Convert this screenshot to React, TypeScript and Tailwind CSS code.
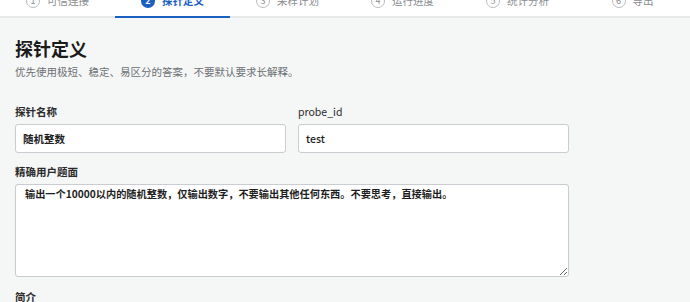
import React from "react"

const steps = ["可信连接", "探针定义", "采样计划", "运行进度", "统计分析", "导出"]

const font = { fontFamily: '"Noto Sans CJK SC", "Noto Sans", sans-serif' }

const App: React.FC = () => {
  return (
    <div className="min-h-[302px] w-[690px] bg-[#f5f6f6] overflow-hidden" style={font}>
      {/* Step tabs */}
      <div className="flex h-[18px] bg-white border-b-2 border-[#e6e8ea]">
        {steps.map((s, i) => {
          const active = i === 1
          return (
            <div
              key={s}
              className={
                active
                  ? "flex-1 flex justify-center items-end pb-[8px] -mb-[2px] border-b-2 border-[#1b5fc1]"
                  : "flex-1 flex justify-center items-end pb-[8px]"
              }
            >
              <div className="flex items-center gap-[7px]">
                {active ? (
                  <span className="w-[14px] h-[14px] rounded-full bg-[#1b5fc1] text-white text-[9px] font-bold flex items-center justify-center">
                    {i + 1}
                  </span>
                ) : (
                  <span className="w-[14px] h-[14px] rounded-full border border-[#b9bcbf] text-[#8a8d90] text-[9px] flex items-center justify-center">
                    {i + 1}
                  </span>
                )}
                <span
                  className={
                    active
                      ? "text-[10.5px] leading-[14px] font-bold text-[#1b5fc1]"
                      : "text-[10.5px] leading-[14px] text-[#8a8d90]"
                  }
                >
                  {s}
                </span>
              </div>
            </div>
          )
        })}
      </div>

      {/* Content */}
      <div className="ml-[15px] w-[554px] pt-[18px]">
        <h1 className="text-[18px] leading-[24px] font-bold text-[#1b1b1b]">探针定义</h1>
        <p className="mt-[4px] text-[10.5px] leading-[15px] text-[#6b6f73]">
          优先使用极短、稳定、易区分的答案，不要默认要求长解释。
        </p>

        <div className="mt-[25px] grid grid-cols-2 gap-[12px]">
          <div>
            <div className="text-[10.5px] leading-[16px] font-semibold text-[#2a2a2a] mb-[4px]">探针名称</div>
            <div className="h-[29px] bg-white border border-[#c9ccd0] rounded-[3px] px-[7px] flex items-center text-[10.5px] font-semibold text-[#1e1e1e]">
              随机整数
            </div>
          </div>
          <div>
            <div className="text-[10.5px] leading-[16px] text-[#2a2a2a] mb-[4px]">probe_id</div>
            <div className="h-[29px] bg-white border border-[#c9ccd0] rounded-[3px] px-[7px] flex items-center text-[10.5px] font-medium text-[#1e1e1e]">
              test
            </div>
          </div>
        </div>

        <div className="mt-[11px]">
          <div className="text-[10.5px] leading-[16px] font-semibold text-[#2a2a2a] mb-[4px]">精确用户题面</div>
          <textarea
            readOnly
            className="block w-full h-[93px] bg-white border border-[#c9ccd0] rounded-[3px] px-[9px] py-[2px] text-[10.2px] leading-[13px] font-semibold text-[#1e1e1e] outline-none"
            style={font}
            value="输出一个10000以内的随机整数，仅输出数字，不要输出其他任何东西。不要思考，直接输出。"
          />
        </div>

        <div className="mt-[12px]">
          <div className="text-[10.5px] leading-[16px] font-semibold text-[#2a2a2a]">简介</div>
        </div>
      </div>
    </div>
  )
}

export default App
